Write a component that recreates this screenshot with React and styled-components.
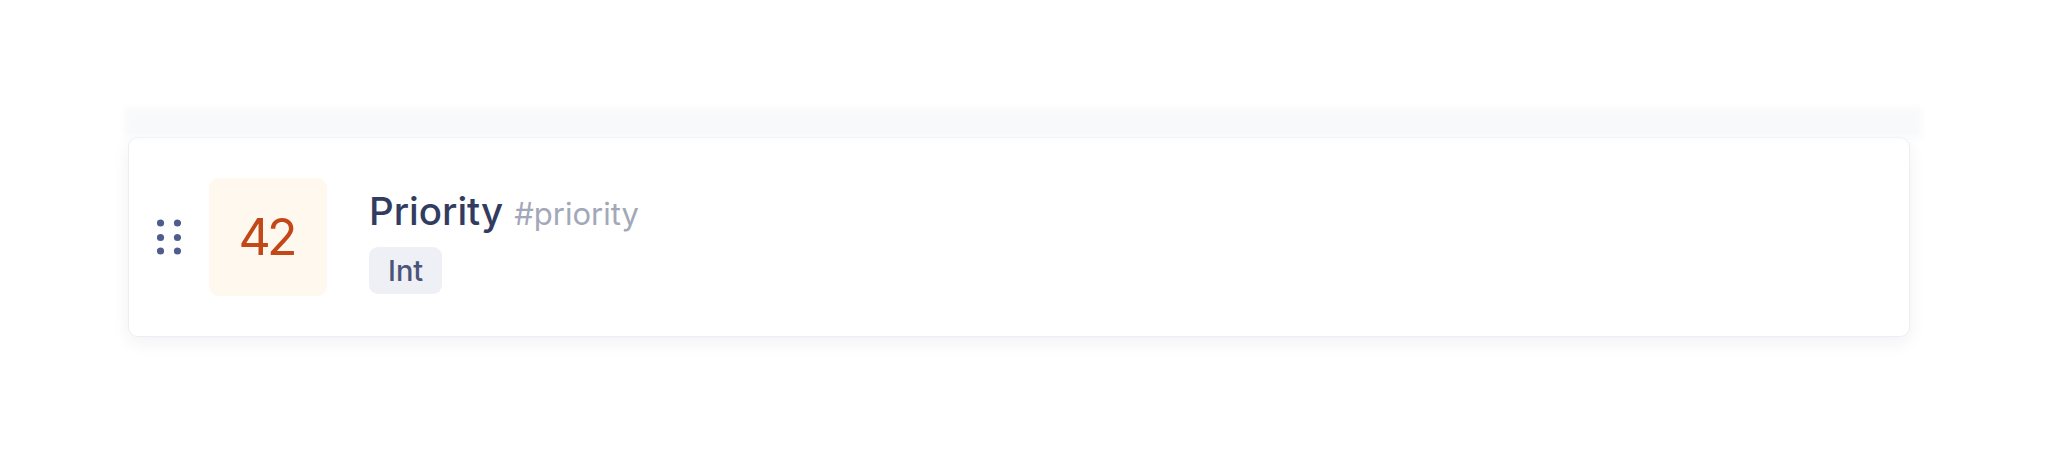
import React from "react";
import styled, { createGlobalStyle } from "styled-components";

const Global = createGlobalStyle`
  html, body { margin: 0; padding: 0; background: #ffffff; }
  body { font-family: Inter, "Noto Sans", "Liberation Sans", sans-serif; }
`;

const Page = styled.div`
  width: 2048px;
  height: 466px;
  padding: 107px 138px 0 128px;
  box-sizing: border-box;
  display: flex;
  flex-direction: column;
`;

const Strip = styled.div`
  height: 30px;
  margin: 0 -12px 0 -4px;
  background: linear-gradient(#fafafc, #f8f9fa);
  filter: blur(3px);
`;

const Card = styled.div`
  height: 200px;
  box-sizing: border-box;
  background: #ffffff;
  border: 1px solid #eceef3;
  border-radius: 10px;
  box-shadow: 0 6px 18px rgba(30, 40, 80, 0.06);
  display: flex;
  align-items: center;
  padding: 0 28px;
`;

const Handle = styled.div`
  display: flex;
  align-items: center;
  width: 24px;
  margin: 0 28px 0 0;
  color: #4f5d8e;
`;

const ValueBox = styled.div`
  width: 118px;
  height: 118px;
  flex: none;
  border-radius: 10px;
  background: #fff8ee;
  display: flex;
  align-items: center;
  justify-content: center;
  color: #c24818;
  font-size: 50px;
  font-weight: 400;
  letter-spacing: -4px;
  padding-right: 4px;
  box-sizing: border-box;
  margin-right: 42px;
`;

const Info = styled.div`
  display: flex;
  flex-direction: column;
  gap: 12px;
  align-items: flex-start;
  margin-top: 8px;
`;

const TitleRow = styled.div`
  display: flex;
  align-items: baseline;
  gap: 11px;
  line-height: 1.2;
`;

const Title = styled.span`
  font-size: 38.5px;
  font-weight: 500;
  color: #323c60;
`;

const Key = styled.span`
  font-size: 31px;
  font-weight: 400;
  color: #a3a8b8;
`;

const Chip = styled.span`
  height: 47px;
  box-sizing: border-box;
  padding: 0 19px;
  border-radius: 9px;
  background: #eef0f6;
  color: #4b5577;
  font-size: 29px;
  font-weight: 500;
  display: inline-flex;
  align-items: center;
`;

const Grip = () => (
  <svg width="24" height="36" viewBox="0 0 24 36" fill="currentColor">
    {[4, 18.5, 32].map((cy) =>
      [3.5, 20.5].map((cx) => <circle key={`${cx}-${cy}`} cx={cx} cy={cy} r="3.6" />)
    )}
  </svg>
);

export default function App() {
  return (
    <>
      <Global />
      <Page>
        <Strip />
        <Card>
          <Handle>
            <Grip />
          </Handle>
          <ValueBox>42</ValueBox>
          <Info>
            <TitleRow>
              <Title>Priority</Title>
              <Key>#priority</Key>
            </TitleRow>
            <Chip>Int</Chip>
          </Info>
        </Card>
      </Page>
    </>
  );
}
